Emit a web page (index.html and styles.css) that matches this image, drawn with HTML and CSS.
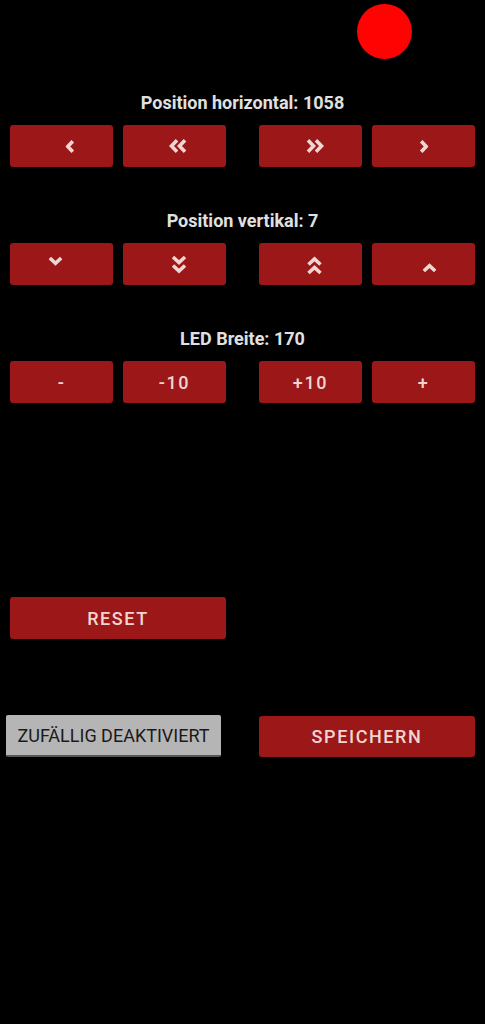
FILE: index.html
```html
<!DOCTYPE html>
<html lang="de">
<head>
<meta charset="utf-8">
<title>LED Steuerung</title>
<link rel="stylesheet" href="styles.css">
</head>
<body>
<div class="screen">
  <div class="top">
    <div class="dot"></div>
  </div>

  <section class="group first">
    <div class="label">Position horizontal: 1058</div>
    <div class="row">
      <button class="btn"><svg class="ic ic-l1" width="9" height="13" viewBox="0 0 9 13"><polyline points="7.3,1.2 2.3,6.5 7.3,11.8"/></svg></button>
      <button class="btn"><svg class="ic ic-l2" width="19" height="14" viewBox="0 0 19 14"><polyline points="8.5,1.3 3,7 8.5,12.7"/><polyline points="16.5,1.3 11,7 16.5,12.7"/></svg></button>
      <button class="btn gapl"><svg class="ic ic-r2" width="19" height="14" viewBox="0 0 19 14"><polyline points="2.5,1.3 8,7 2.5,12.7"/><polyline points="10.5,1.3 16,7 10.5,12.7"/></svg></button>
      <button class="btn"><svg class="ic ic-r1" width="9" height="13" viewBox="0 0 9 13"><polyline points="1.7,1.2 6.7,6.5 1.7,11.8"/></svg></button>
    </div>
  </section>

  <section class="group">
    <div class="label">Position vertikal: 7</div>
    <div class="row">
      <button class="btn"><svg class="ic ic-d1" width="14" height="10" viewBox="0 0 14 10"><polyline points="1.3,2 7,7.3 12.7,2"/></svg></button>
      <button class="btn"><svg class="ic ic-d2" width="15" height="20" viewBox="0 0 15 20"><polyline points="1.5,2 7.5,7.5 13.5,2"/><polyline points="1.5,10.5 7.5,16 13.5,10.5"/></svg></button>
      <button class="btn gapl"><svg class="ic ic-u2" width="15" height="20" viewBox="0 0 15 20"><polyline points="1.5,9.5 7.5,4 13.5,9.5"/><polyline points="1.5,18 7.5,12.5 13.5,18"/></svg></button>
      <button class="btn"><svg class="ic ic-u1" width="14" height="10" viewBox="0 0 14 10"><polyline points="1.3,8 7,2.7 12.7,8"/></svg></button>
    </div>
  </section>

  <section class="group">
    <div class="label">LED Breite: 170</div>
    <div class="row">
      <button class="btn txt">-</button>
      <button class="btn txt">-10</button>
      <button class="btn txt gapl">+10</button>
      <button class="btn txt">+</button>
    </div>
  </section>

  <div class="reset-row">
    <button class="btn wide txt">RESET</button>
  </div>

  <div class="bottom-row">
    <button class="toggle">ZUFÄLLIG DEAKTIVIERT</button>
    <button class="btn wide txt save">SPEICHERN</button>
  </div>
</div>
</body>
</html>
```

FILE: styles.css
```css
* { box-sizing: border-box; }

html, body {
  margin: 0;
  padding: 0;
  background: #000;
}

body {
  font-family: Roboto, "Noto Sans", "Liberation Sans", sans-serif;
  color: #e2e2e2;
}

.screen {
  width: 485px;
  min-height: 1024px;
  padding: 0 10px;
}

.top {
  display: flex;
  justify-content: flex-end;
  padding-top: 4px;
  padding-right: 63px;
}

.dot {
  width: 55px;
  height: 55px;
  border-radius: 50%;
  background: #ff0202;
}

.group {
  margin-top: 42px;
}

.group.first {
  margin-top: 32px;
}

.label {
  height: 22px;
  line-height: 22px;
  text-align: center;
  font-weight: 700;
  font-size: 18px;
  color: #e0e0e0;
  margin-bottom: 12px;
  padding-top: 1px;
}

.row {
  display: flex;
  gap: 10px;
}

.btn {
  width: 103px;
  height: 42px;
  border: 0;
  border-radius: 3px;
  background: #9c1818;
  color: #f1d5d2;
  display: flex;
  align-items: center;
  justify-content: center;
  padding: 0;
  font-family: Roboto, "Noto Sans", "Liberation Sans", sans-serif;
}

.btn.gapl {
  margin-left: 23px;
}

.btn.txt {
  font-size: 18px;
  font-weight: 500;
  letter-spacing: 1.6px;
}

.ic {
  display: block;
  fill: none;
  stroke: #f1d5d2;
  stroke-width: 3.6;
  stroke-linejoin: miter;
  stroke-linecap: butt;
}

.ic-l1 { transform: translate(8.5px, 0); }
.ic-l2 { transform: translate(3.5px, 0); }
.ic-r2 { transform: translate(4.5px, 0); }
.ic-r1 { transform: translate(0.5px, 0); }
.ic-d1 { transform: translate(-6.5px, -3px); }
.ic-d2 { transform: translate(4.5px, 1px); }
.ic-u2 { transform: translate(4px, 1px); }
.ic-u1 { transform: translate(5.5px, 4px); }

.reset-row {
  margin-top: 194px;
  display: flex;
}

.btn.wide {
  width: 216px;
}

.bottom-row {
  margin-top: 76px;
  display: flex;
  align-items: flex-start;
}

.toggle {
  width: 215px;
  height: 42px;
  margin-left: -4px;
  border: 0;
  border-bottom: 2px solid #555;
  border-radius: 2px;
  background: #b5b5b5;
  color: #1a1a1a;
  font-family: Roboto, "Noto Sans", "Liberation Sans", sans-serif;
  font-size: 18px;
  font-weight: 400;
  padding: 0;
  display: flex;
  align-items: center;
  justify-content: center;
}

.btn.save {
  margin-left: 38px;
  margin-top: 1px;
  height: 41px;
}
```
